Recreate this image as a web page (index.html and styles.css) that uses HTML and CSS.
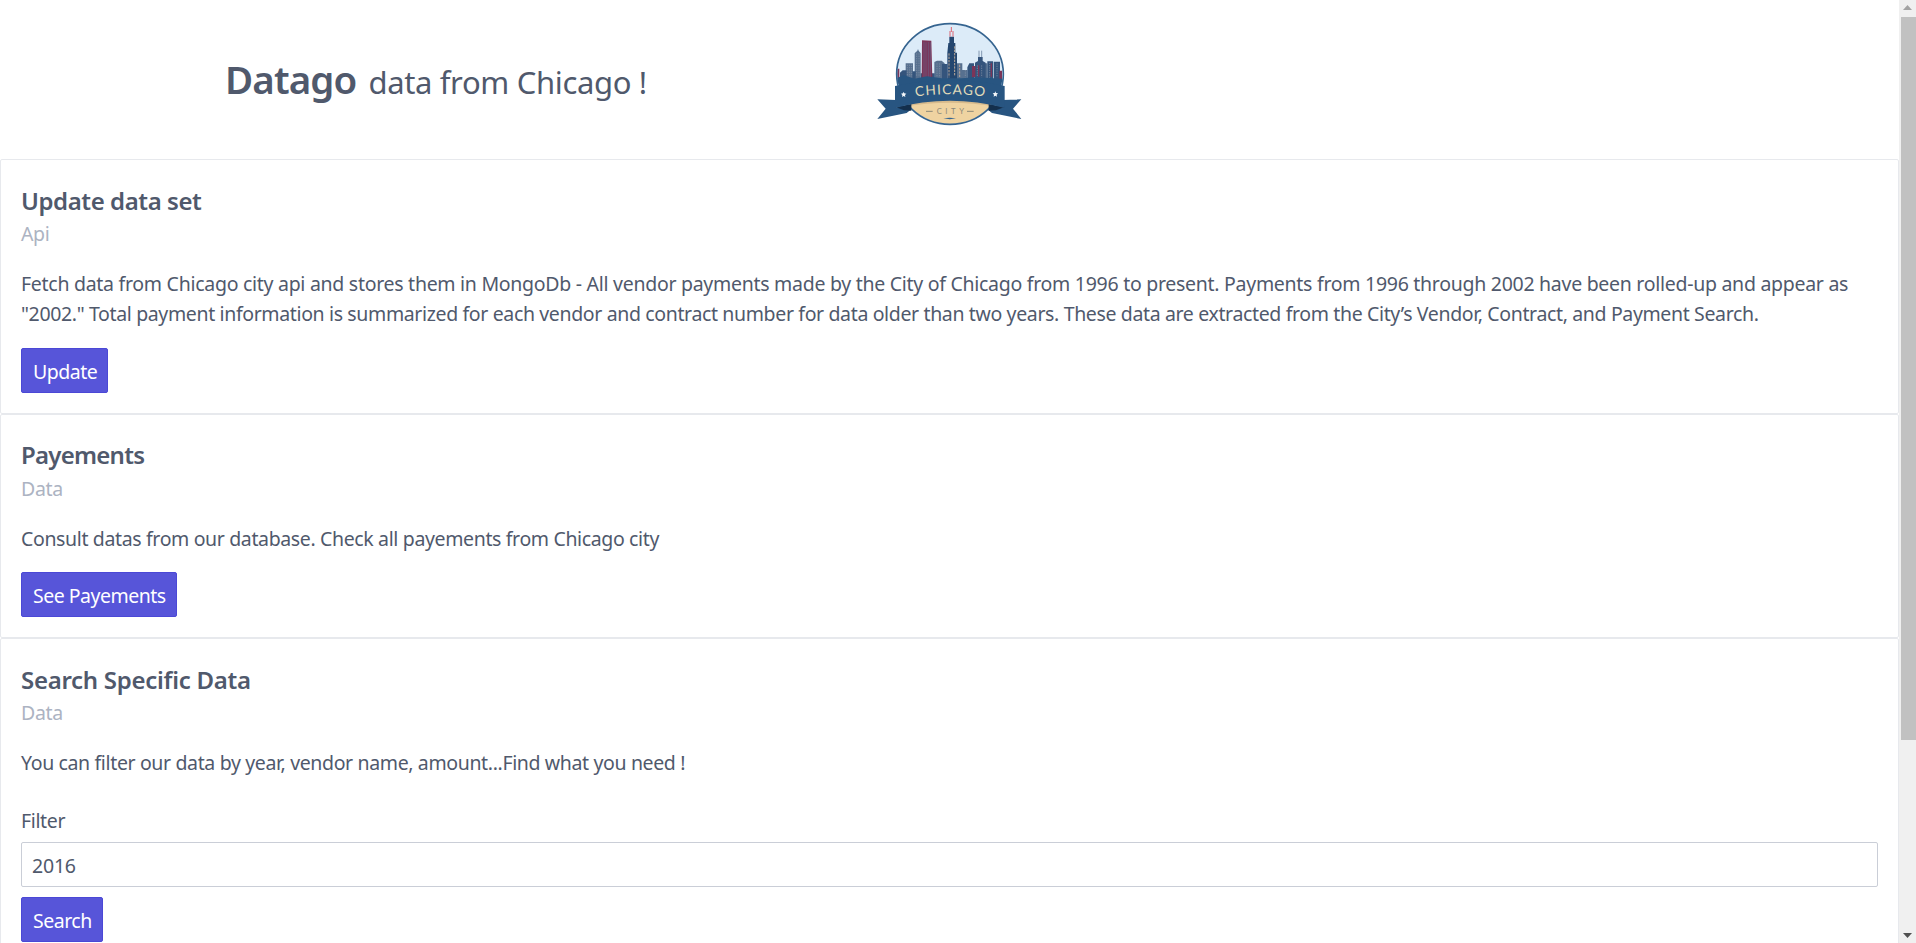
FILE: index.html
```html
<!DOCTYPE html>
<html lang="en">
<head>
<meta charset="utf-8">
<title>Datago</title>
<link rel="stylesheet" href="styles.css">
</head>
<body>
<div class="page">
  <header class="hero">
    <h1 class="hero-title"><span class="brand">Datago</span> <small class="tagline">data from Chicago !</small></h1>
    <svg class="logo" viewBox="0 0 540 390" role="img" aria-label="Chicago City">
      <defs>
        <clipPath id="disc"><ellipse cx="270" cy="192" rx="158" ry="150"/></clipPath>
        <path id="arc" d="M150 262 Q270 243 390 262"/>
      </defs>
      <ellipse cx="270" cy="192" rx="158" ry="150" fill="#dcebf8"/>
      <g clip-path="url(#disc)">
        <path fill="#57708f" d="M137 160h22v60h-22zM164 130l8-8 2-5 2 5 6 8v90h-18zM223 156l8-4h14l9 8v60h-31zM290 160h17v60h-17zM306 180h16v40h-16zM368 160h14v60h-14z"/>
        <path fill="#34547c" d="M120 188l8-7h12v40h-20zM157 184h10v36h-10zM182 190h42v30h-42zM246 162h16v58h-16zM322 172l6-12h14v60h-20zM345 158l9-5v-12h14v12l9 5v62h-32zM382 154h17v66h-17zM401 155h19v65h-19z"/>
        <path fill="#7c3558" d="M186 91l28 1 3 112h-32zM110 176h8v45h-8zM336 168h10v34h-10zM354 166h4v34h-4zM392 160h4v40h-4zM418 182h8v30h-8z"/>
        <path stroke="#6a5d85" stroke-width="2" d="M192 96v105M198 97v105M205 96v105M211 97v105" fill="none"/>
        <path fill="#24466f" d="M262 128l3-29h3V80h14v19h4v29h5v85h-29z"/>
        <path stroke="#bda999" stroke-width="3" stroke-dasharray="7 3" d="M267 130v72M284 109v87M299 164v38" fill="none"/>
        <path stroke="#8796aa" stroke-width="2" stroke-dasharray="4 3" d="M142 164v36M149 164v36M155 164v36M170 130v68M177 130v68M231 160v40M239 160v40M316 180v22M352 166v36M365 166v36M389 158v45M411 160v42" fill="none"/>
        <path stroke="#db6370" stroke-width="3" d="M270 80V63M279 80V63M274 66V51" fill="none"/>
        <path stroke="#57708f" stroke-width="2" d="M357 142v-20M365 142v-20" fill="none"/>
        <path fill="#285581" d="M106 206l25-11 32 11 38-7 44 6h60l40-3 86 4v70H106z"/>
        <path fill="#efd3a1" d="M110 280Q270 256 430 280v80H110z"/>
        <path fill="#d7ba8c" d="M130 283Q270 258 410 283v7Q270 266 130 290z"/>
      </g>
      <ellipse cx="270" cy="192" rx="160" ry="151" fill="none" stroke="#356490" stroke-width="5"/>
      <path fill="#285581" d="M52 268l56 2v22l46 6-14 11-88 18 25-31zM484 268l-56 2v22l-46 6 14 11 88 18-25-31z"/>
      <path fill="#142f4c" d="M106 291l48-9v20l-22-1zM434 291l-48-9v20l22-1z"/>
      <path fill="#285581" d="M105 228Q270 192 434 228v66Q270 251 105 294z"/>
      <path fill="#f4f7fa" d="M131 245l2 5 6 1-4 4 1 6-5-3-5 3 1-6-4-4 6-1zM406 244l2 5 6 1-4 4 1 6-5-3-5 3 1-6-4-4 6-1z"/>
      <text class="logo-name"><textPath href="#arc" startOffset="17" textLength="208">CHICAGO</textPath></text>
      <text class="logo-city" x="230" y="311" textLength="82">CITY</text>
      <path stroke="#8c8878" stroke-width="3" d="M198 304h20M321 304h20"/>
      <path fill="#356490" d="M250 325q20-4 38 0-18 5-38 0z"/>
    </svg>
  </header>

  <main>
    <section class="card">
      <h2 class="card-title">Update data set</h2>
      <p class="card-subtitle">Api</p>
      <p class="card-body"><span class="wide-line">Fetch data from Chicago city api and stores them in MongoDb - All vendor payments made by the City of Chicago from 1996 to present. Payments from 1996 through 2002 have been rolled-up and appear as</span><br>"2002." Total payment information is summarized for each vendor and contract number for data older than two years. These data are extracted from the City’s Vendor, Contract, and Payment Search.</p>
      <button class="btn">Update</button>
    </section>
    <section class="card">
      <h2 class="card-title title-tight">Payements</h2>
      <p class="card-subtitle">Data</p>
      <p class="card-body">Consult datas from our database. Check all payements from Chicago city</p>
      <button class="btn">See Payements</button>
    </section>
    <section class="card">
      <h2 class="card-title title-loose">Search Specific Data</h2>
      <p class="card-subtitle">Data</p>
      <p class="card-body">You can filter our data by year, vendor name, amount...Find what you need !</p>
      <label class="field-label" for="filter">Filter</label>
      <input class="field" id="filter" type="text" value="2016">
      <button class="btn">Search</button>
    </section>
  </main>
</div>
<aside class="scrollbar">
  <svg class="arrow" viewBox="0 0 17 17"><path fill="#a3a3a3" d="M4 10h9L8.500 5z"/></svg>
  <div class="thumb"></div>
  <svg class="arrow arrow-down" viewBox="0 0 17 17"><path fill="#505050" d="M4 7h9l-4.500 5z"/></svg>
</aside>
</body>
</html>
```

FILE: styles.css
```css
* { box-sizing: border-box; }

body {
  display: flex;
  height: 943px;
  margin: 0;
  overflow: hidden;
  background: #fff;
  color: #50596c;
  font-family: "Noto Sans", "Open Sans", sans-serif;
  font-size: 19.5px;
  letter-spacing: -0.36px;
  line-height: 30px;
}

.page { flex: 1; height: 943px; overflow: hidden; }

.hero {
  display: flex;
  height: 159.3px;
  padding: 10px 0 0 225px;
}

.hero-title {
  width: 635px;
  margin: 45px 0 0;
  font-size: 38.5px;
  font-weight: 600;
  letter-spacing: -0.9px;
  line-height: 48px;
  white-space: nowrap;
}

.tagline {
  margin-left: 3px;
  font-size: 31px;
  font-weight: 400;
  letter-spacing: -0.35px;
}

.logo { width: 180px; height: 130px; letter-spacing: 0; }
.logo-name { fill: #e2dcba; font: 41px Lato, sans-serif; }
.logo-city { fill: #8c8878; font: 23px Lato, sans-serif; }

.card {
  padding: 20px;
  border: 1px solid #e7e9ed;
  border-radius: 2px;
}

.card-title {
  margin: 0;
  padding-top: 1.5px;
  font-size: 24px;
  font-weight: 600;
  letter-spacing: -0.42px;
  line-height: 37.5px;
}

.title-tight { letter-spacing: -0.75px; }
.title-loose { letter-spacing: -0.28px; }

/* The title's offset is taken back here to keep the card height. */
.card-subtitle { margin: 0; color: #acb3c2; }
.card-body { margin: 20px 0 18.5px; white-space: nowrap; }
.wide-line { letter-spacing: -0.28px; }

.btn {
  display: block;
  height: 45px;
  padding: 3px 10px 0 11px;
  border: 1px solid #4b48d6;
  border-radius: 2px;
  background: #5755d9;
  color: #fff;
  font: inherit;
  letter-spacing: -0.5px;
}

.field-label { display: block; padding: 9.5px 0 5.5px; }

.field {
  display: block;
  width: 100%;
  height: 45px;
  margin-bottom: 10px;
  padding: 3px 10px 0;
  border: 1px solid #caced7;
  border-radius: 2px;
  color: #50596c;
  font: inherit;
  letter-spacing: -0.2px;
}

.scrollbar {
  display: flex;
  flex-direction: column;
  width: 17px;
  background: #f0f0f0;
}

.arrow { width: 17px; height: 17px; }
.arrow-down { margin-top: auto; }
.thumb { height: 723px; margin-left: 2px; background: #c1c1c1; }
```
